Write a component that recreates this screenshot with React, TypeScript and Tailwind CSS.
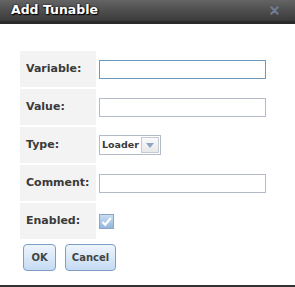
import { useState } from 'react';

const FONT = "font-['DejaVu_Sans',Verdana,sans-serif]";

function TextField({ focused }: { focused?: boolean }) {
  return (
    <input
      className={`block h-[19px] w-[167px] border bg-white px-1 text-[11px] outline-none ${
        focused ? 'border-[#6d9bc0]' : 'border-[#b3bac8]'
      }`}
    />
  );
}

function Row({ label, children }: { label: string; children: React.ReactNode }) {
  return (
    <div className="flex h-[36px]">
      <div className="flex w-[76px] items-center bg-[#f3f3f3] pl-[6px] text-[11px] font-bold text-[#3a3a3a]">
        {label}
      </div>
      <div className="flex items-center pl-[3px]">{children}</div>
    </div>
  );
}

export default function App() {
  const [enabled, setEnabled] = useState(true);

  return (
    <div className={`${FONT} flex h-[287px] w-[295px] flex-col bg-white`}>
      <div className="flex h-[24px] items-center justify-between border-b-[3px] border-[#2a2a2a] bg-gradient-to-b from-[#646464] to-[#3a3a3a] pl-[11px] pr-[16px]">
        <span className="text-[12.5px] font-bold text-white [text-shadow:0_0_2px_#000,1px_1px_1px_#000]">
          Add Tunable
        </span>
        <svg width="9" height="9" viewBox="0 0 10 10">
          <path d="M1.5 1.5 L8.5 8.5 M8.5 1.5 L1.5 8.5" stroke="#6f7d92" strokeWidth="2.4" strokeLinecap="round" />
        </svg>
      </div>

      <div className="flex flex-1 flex-col pl-[20px] pt-[27px]">
        <div className="flex flex-col gap-[2px]">
          <Row label="Variable:">
            <TextField focused />
          </Row>
          <Row label="Value:">
            <TextField />
          </Row>
          <Row label="Type:">
            <div className="flex h-[20px] border border-[#b3bac8] bg-white">
              <span className="flex items-center pl-[2px] pr-[1px] text-[9.5px] font-bold text-[#3a3a3a]">Loader</span>
              <span className="m-[1px] flex w-[18px] items-center justify-center border border-[#c4c9d3] bg-gradient-to-b from-[#fafafa] to-[#e8e8e8]">
                <svg width="8" height="5" viewBox="0 0 8 5">
                  <path d="M0 0 H8 L4 5 Z" fill="#8fa3c6" />
                </svg>
              </span>
            </div>
          </Row>
          <Row label="Comment:">
            <TextField />
          </Row>
          <Row label="Enabled:">
            <button
              type="button"
              onClick={() => setEnabled(!enabled)}
              className="flex h-[15px] w-[15px] items-center justify-center border border-[#8ea6c4] bg-gradient-to-b from-[#c9ddf2] to-[#94b6dc]"
            >
              {enabled && (
                <svg width="11" height="11" viewBox="0 0 11 11">
                  <path d="M1.5 6 L4.2 8.8 L9.8 2" stroke="#ffffff" strokeWidth="2.2" fill="none" />
                </svg>
              )}
            </button>
          </Row>
        </div>

        <div className="mt-[5px] flex gap-[9px] pl-[3px]">
          <button className="h-[27px] w-[33px] rounded-[4px] border border-[#7d9ec6] bg-gradient-to-b from-[#eef5fc] to-[#c5dbf3] text-[10px] font-bold text-[#444]">
            OK
          </button>
          <button className="h-[27px] w-[51px] rounded-[4px] border border-[#7d9ec6] bg-gradient-to-b from-[#eef5fc] to-[#c5dbf3] text-[10px] font-bold text-[#444]">
            Cancel
          </button>
        </div>

        <div className="flex-1" />
      </div>
      <div className="h-[2px] bg-[#333]" />
    </div>
  );
}
